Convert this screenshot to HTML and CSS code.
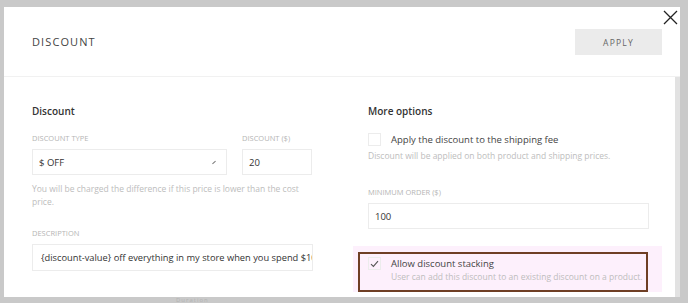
FILE: index.html
```html
<!DOCTYPE html>
<html lang="en">
<head>
    <meta charset="UTF-8">
    <meta name="viewport" content="width=device-width, initial-scale=1.0">
    <title>Discount</title>
    <link rel="stylesheet" href="styles.css">
</head>
<body>
    <div class="backdrop-text bottom-text">Duration</div>

    <div class="modal">
        <span class="close">
            <svg width="15" height="15" viewBox="0 0 15 15">
                <path d="M1 1 L14 14 M14 1 L1 14" stroke="#222" stroke-width="1.3" fill="none"/>
            </svg>
        </span>

        <div class="modal-header">
            <h2>Discount</h2>
            <button class="apply-btn">Apply</button>
        </div>

        <div class="modal-body">
            <div class="column">
                <h3>Discount</h3>
                <div class="field-row">
                    <div class="field type-field">
                        <label>Discount type</label>
                        <div class="input select">
                            <span>$ OFF</span>
                            <span class="chevron"></span>
                        </div>
                    </div>
                    <div class="field amount-field">
                        <label>Discount ($)</label>
                        <div class="input">20</div>
                    </div>
                </div>
                <p class="help cost-help">You will be charged the difference if this price is lower than the cost price.</p>

                <div class="field description-field">
                    <label>Description</label>
                    <div class="input description">{discount-value} off everything in my store when you spend $100</div>
                </div>
            </div>

            <div class="column">
                <h3>More options</h3>
                <div class="option">
                    <span class="checkbox"></span>
                    <span class="option-label">Apply the discount to the shipping fee</span>
                </div>
                <p class="help option-help">Discount will be applied on both product and shipping prices.</p>

                <div class="field min-field">
                    <label>Minimum order ($)</label>
                    <div class="input">100</div>
                </div>

                <div class="stacking-area">
                    <div class="stacking-box">
                        <div class="option">
                            <span class="checkbox checked">
                                <svg width="9" height="8" viewBox="0 0 9 8">
                                    <path d="M1 4.2 L3.4 6.4 L8 1.2" stroke="#555" stroke-width="1.1" fill="none"/>
                                </svg>
                            </span>
                            <span class="option-label">Allow discount stacking</span>
                        </div>
                        <p class="help stack-help">User can add this discount to an existing discount on a product.</p>
                    </div>
                </div>
            </div>
            <div class="scrollbar"></div>
        </div>
    </div>
</body>
</html>
```

FILE: styles.css
```css
body {
    font-family: "Open Sans", Arial, sans-serif;
    background-color: #c9c9c9;
    margin: 0;
    padding: 0;
    width: 688px;
    height: 303px;
    overflow: hidden;
    position: relative;
}

.backdrop-text {
    position: absolute;
    color: #b3b3b3;
    font-size: 6px;
    line-height: 6px;
    letter-spacing: 1px;
}

.bottom-text {
    left: 176px;
    top: 297px;
}

.modal {
    position: relative;
    background-color: #fff;
    width: 676px;
    height: 290px;
    margin: 7px 0 0 4px;
    display: flex;
    flex-direction: column;
}

.close {
    position: absolute;
    top: 1px;
    right: 2px;
    width: 15px;
    height: 15px;
}

.modal-header {
    height: 69px;
    flex-shrink: 0;
    display: flex;
    align-items: center;
    justify-content: space-between;
    padding: 0 18px 0 28px;
    border-bottom: 1px solid #f1f1f1;
}

.modal-header h2 {
    margin: 0;
    font-size: 11px;
    font-weight: 400;
    letter-spacing: 1.1px;
    text-transform: uppercase;
    color: #444;
}

.apply-btn {
    width: 87px;
    height: 26px;
    background-color: #ebebeb;
    border: none;
    color: #666;
    font-family: "Open Sans", Arial, sans-serif;
    font-size: 8.5px;
    letter-spacing: 1.2px;
    text-transform: uppercase;
    margin-top: 1px;
}

.modal-body {
    flex: 1;
    display: flex;
    gap: 55px;
    padding: 27px 0 0 28px;
    position: relative;
    overflow: hidden;
}

.scrollbar {
    position: absolute;
    right: 0;
    top: 0;
    bottom: 0;
    width: 5px;
    background-color: #e2e2e2;
}

.column {
    width: 281px;
}

.column h3 {
    margin: 0 0 15px;
    font-size: 10px;
    font-weight: 600;
    color: #333;
}

label {
    display: block;
    font-size: 7.5px;
    text-transform: uppercase;
    color: #b5b5b5;
    margin-bottom: 6px;
}

.field-row {
    display: flex;
    gap: 15px;
}

.type-field {
    width: 195px;
}

.amount-field {
    width: 70px;
}

.input {
    box-sizing: border-box;
    height: 26px;
    border: 1px solid #ececec;
    font-size: 9.5px;
    color: #333;
    padding: 0 6px;
    display: flex;
    align-items: center;
    white-space: nowrap;
    overflow: hidden;
}

.select {
    justify-content: space-between;
    padding-right: 10px;
}

.chevron {
    width: 4px;
    height: 1px;
    background-color: #777;
    transform: rotate(-40deg);
}

.help {
    margin: 7px 0 0;
    font-size: 8.5px;
    line-height: 13px;
    color: #bdbdbd;
}

.cost-help {
    width: 272px;
}

.description-field {
    margin-top: 20px;
}

.description {
    padding-left: 8px;
    height: 27px;
    font-size: 9.3px;
}

.option {
    display: flex;
    align-items: center;
}

.checkbox {
    box-sizing: border-box;
    width: 13px;
    height: 13px;
    border: 1px solid #ececec;
    margin-right: 10px;
    display: flex;
    align-items: center;
    justify-content: center;
}

.option-label {
    font-size: 9.5px;
    color: #444;
}

.option-help {
    margin-top: 3px;
}

.min-field {
    margin-top: 25px;
}

.stacking-area {
    margin: 17px 0 0 -15px;
    width: 304px;
    height: 40px;
    background-color: #fdf0fc;
    padding: 6px 0 0 5px;
}

.stacking-box {
    box-sizing: border-box;
    border: 2px solid #6f3f25;
    width: 290px;
    height: 40px;
    padding: 3px 0 0 8px;
}

.stack-help {
    margin: 0 0 0 23px;
}
```
